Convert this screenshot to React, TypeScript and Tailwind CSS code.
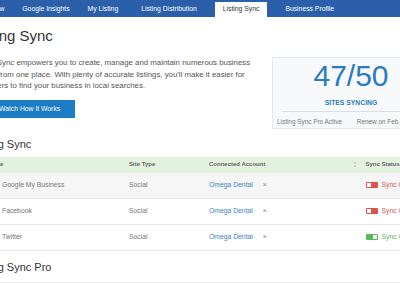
import React from "react";

const tabs = [
  { label: "Overview", cls: "ml-[-32px]" },
  { label: "Google Insights", cls: "ml-[2px]" },
  { label: "My Listing", cls: "ml-[2px]" },
  { label: "Listing Distribution", cls: "ml-[7px]" },
  { label: "Listing Sync", cls: "ml-[10px]", active: true },
  { label: "Business Profile", cls: "ml-[10px]" },
];

const rows = [
  { name: "Google My Business", icon: "bg-[#4285f4]", on: false, shade: true },
  { name: "Facebook", icon: "bg-[#3b5998]", on: false, shade: false },
  { name: "Twitter", icon: "bg-[#1da1f2]", on: true, shade: false },
];

function Toggle({ on }: { on: boolean }) {
  return (
    <span
      className={`flex h-[6px] w-[12px] items-center rounded-[1px] px-[1px] ${
        on ? "justify-end bg-[#5cb85c]" : "justify-start bg-[#d9534f]"
      }`}
    >
      <span className="h-[4px] w-[4px] bg-white" />
    </span>
  );
}

export default function App() {
  return (
    <div className="h-[284px] w-[400px] overflow-hidden bg-white font-['Liberation_Sans',Arial,sans-serif]">
      {/* top tabs */}
      <div className="flex h-[17px] items-end whitespace-nowrap bg-[#2b5faa] text-[6.8px]">
        {tabs.map((t) => (
          <div
            key={t.label}
            className={`flex h-[15px] shrink-0 items-center px-[8px] ${t.cls} ${
              t.active ? "bg-white text-[#333]" : "text-white"
            }`}
          >
            {t.label}
          </div>
        ))}
      </div>

      <div className="ml-[-28px] w-[480px]">
        <h1 className="mt-[10px] text-[15px] leading-[18px] text-[#333]">Listing Sync</h1>

        <div className="mt-[12px] flex items-start">
          <div className="w-[300px] shrink-0">
            <p className="w-[288px] text-[7.85px] leading-[11.7px] text-[#555]">
              Listing Sync empowers you to create, manage and maintain numerous business listings from one
              place. With plenty of accurate listings, you'll make it easier for customers to find your
              business in local searches.
            </p>
            <button className="mt-[7.5px] flex h-[18.5px] items-center gap-[4px] bg-[#1d7cc6] px-[15px] text-[6.8px] text-white">
              <svg width="8" height="8" viewBox="0 0 8 8">
                <path d="M1 0.5 L7 4 L1 7.5 Z" fill="white" />
              </svg>
              Watch How It Works
            </button>
          </div>

          <div className="h-[72px] w-[158px] shrink-0 border border-[#e6e8ea] bg-[#f8f9fa] px-[4px] pt-[3px] text-center">
            <div className="text-[30px] leading-[30px] text-[#2a7bc1]">47/50</div>
            <div className="mt-[7.5px] text-[6.8px] font-bold leading-[8px] text-[#2a7bc1]">SITES SYNCING</div>
            <div className="mx-[5px] mt-[4.5px] border-t border-[#dcdfe2]" />
            <div className="mt-[5.5px] flex justify-between text-[6.4px] leading-[8px] text-[#777]">
              <span>Listing Sync Pro Active</span>
              <span>Renew on Feb 15, 2020</span>
            </div>
          </div>
        </div>

        <h2 className="mt-[8.5px] text-[11px] leading-[13px] text-[#333]">Listing Sync</h2>

        <div className="mt-[6.3px] text-[6.8px]">
          <div className="flex h-[16px] items-center bg-[#e3f2df] text-[6px] font-bold text-[#666]">
            <div className="w-[157px] pl-[15px]">Name</div>
            <div className="w-[80px]">Site Type</div>
            <div className="flex w-[156.5px] items-center">
              <span>Connected Account</span>
              <span className="ml-auto mr-[10px] flex flex-col gap-[1px]">
                <span className="h-[2px] w-[2px] bg-[#c9d6c6]" />
                <span className="h-[2px] w-[2px] bg-[#c9d6c6]" />
              </span>
            </div>
            <div>Sync Status</div>
          </div>

          {rows.map((r) => (
            <div
              key={r.name}
              className={`flex h-[26px] items-center border-b border-[#e8e8e8] ${r.shade ? "bg-[#f6f6f6]" : "bg-white"}`}
            >
              <div className="flex w-[157px] items-center gap-[5px] pl-[15px] text-[#777]">
                <span className={`h-[10px] w-[10px] rounded-[2px] ${r.icon}`} />
                {r.name}
              </div>
              <div className="w-[80px] text-[#777]">Social</div>
              <div className="flex w-[156.5px] items-center">
                <span className="text-[#3a86c2]">Omega Dental</span>
                <span className="ml-[10px] text-[7px] text-[#888]">×</span>
              </div>
              <div className="flex items-center gap-[4px]">
                <Toggle on={r.on} />
                <span className={r.on ? "text-[#5cb85c]" : "text-[#d9534f]"}>{r.on ? "Sync On" : "Sync Off"}</span>
              </div>
            </div>
          ))}
        </div>

        <h2 className="mt-[10.7px] text-[11px] leading-[13px] text-[#333]">Listing Sync Pro</h2>
        <div className="mt-[8px] border-t border-[#efefef]" />
      </div>
    </div>
  );
}
